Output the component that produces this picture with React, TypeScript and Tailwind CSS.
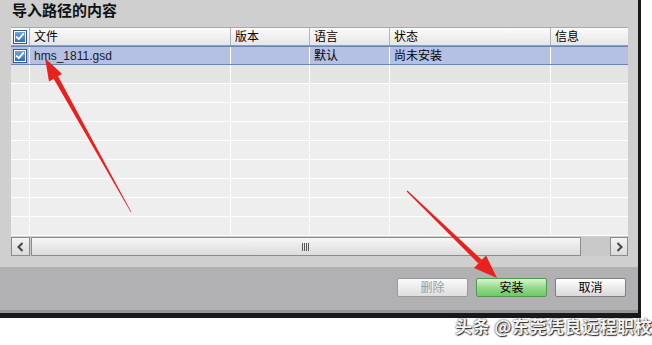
import React from 'react'

const cols = [19, 201, 79, 80, 161, 77]
const font = '"Liberation Sans", "Noto Sans CJK SC", sans-serif'

function Check() {
  return (
    <span className="flex h-[14px] w-[14px] items-center justify-center border border-[#39598a] bg-white p-[1px]">
      <span className="flex h-full w-full items-center justify-center bg-gradient-to-b from-[#6fa6e0] to-[#2e6cc0]">
        <svg width="10" height="9" viewBox="0 0 10 9">
          <path d="M1.2 4.6 L3.8 7.2 L8.8 1.4" fill="none" stroke="#fff" strokeWidth="1.8" />
        </svg>
      </span>
    </span>
  )
}

function Row({ cells, className }: { cells: React.ReactNode[]; className: string }) {
  return (
    <div className={`flex h-[19px] ${className}`}>
      {cols.map((w, i) => (
        <div
          key={i}
          style={{ width: w }}
          className="flex shrink-0 items-center overflow-hidden border-r border-white pl-[4px] text-[12px] leading-none text-black last:border-r-0"
        >
          {cells[i]}
        </div>
      ))}
    </div>
  )
}

function Btn({ label, kind }: { label: string; kind: 'off' | 'go' | 'norm' }) {
  const cls =
    kind === 'go'
      ? 'border-[#4f9a4c] bg-gradient-to-b from-[#d9f3d2] via-[#94da8c] to-[#72c66c] text-black'
      : kind === 'off'
        ? 'border-[#9a9a9a] bg-gradient-to-b from-[#fafafa] to-[#dedede] text-[#9c9c9c]'
        : 'border-[#7f7f7f] bg-gradient-to-b from-[#ffffff] to-[#d9d9d9] text-black'
  return (
    <div className={`flex h-[19px] w-[71px] items-center justify-center rounded-[2px] border text-[12px] leading-none ${cls}`}>
      {label}
    </div>
  )
}

export default function App() {
  return (
    <div className="relative h-[345px] w-[652px] overflow-hidden bg-white" style={{ fontFamily: font }}>
      <div className="flex h-[318px] w-[641px] flex-col border-r-[3px] border-b-[5px] border-[#19191b]">
        <div className="flex h-[267px] flex-col bg-[#cfcfcf] pl-[11px] pr-[10px]">
          <div className="h-[27px] pl-[1px] pt-[2px] text-[15px] font-bold leading-[18px] text-[#111]">导入路径的内容</div>
          <div className="flex flex-col">
            <div className="flex h-[19px] border-t border-[#a9a9a9] border-b border-b-[#9d9d9d] bg-gradient-to-b from-[#fbfbfb] to-[#e6e6e6]">
              {cols.map((w, i) => (
                <div
                  key={i}
                  style={{ width: w }}
                  className="flex shrink-0 items-center border-r border-[#b4b4b4] pl-[4px] text-[12px] leading-none text-black last:border-r-0"
                >
                  {i === 0 ? <span className="-ml-[2px]"><Check /></span> : ['', '文件', '版本', '语言', '状态', '信息'][i]}
                </div>
              ))}
            </div>
            <Row
              className="border-y border-[#6a84b4] bg-[#b4c1e4]"
              cells={[
                <span className="-ml-[2px]"><Check /></span>,
                <span className="text-[#1a1a2a]">hms_1811.gsd</span>,
                '',
                '默认',
                '尚未安装',
                '',
              ]}
            />
            {Array.from({ length: 9 }).map((_, r) => (
              <Row
                key={r}
                className={`border-b border-white ${r === 0 ? 'bg-[#e4e4e4]' : 'bg-[#eeeeee]'}`}
                cells={[]}
              />
            ))}
          </div>
          <div className="mt-[1px] flex h-[19px] items-stretch bg-[#c9c9c9]">
            <div className="flex w-[19px] items-center justify-center border border-[#8c8c8c] bg-gradient-to-b from-[#f4f4f4] to-[#dadada]">
              <svg width="7" height="10" viewBox="0 0 7 10"><path d="M5.5 1 L1.5 5 L5.5 9" fill="none" stroke="#444" strokeWidth="2" /></svg>
            </div>
            <div className="ml-[1px] flex w-[550px] items-center justify-center border border-[#8c8c8c] bg-gradient-to-b from-[#f6f6f6] to-[#dcdcdc]">
              <svg width="8" height="8" viewBox="0 0 8 8">
                <path d="M0.5 0 V8 M2.5 0 V8 M4.5 0 V8 M6.5 0 V8" stroke="#555" strokeWidth="1" />
              </svg>
            </div>
            <div className="flex-1" />
            <div className="flex w-[18px] items-center justify-center border border-[#8c8c8c] bg-gradient-to-b from-[#f4f4f4] to-[#dadada]">
              <svg width="7" height="10" viewBox="0 0 7 10"><path d="M1.5 1 L5.5 5 L1.5 9" fill="none" stroke="#444" strokeWidth="2" /></svg>
            </div>
          </div>
        </div>
        <div className="flex flex-1 items-start justify-end gap-[8px] border-b-[3px] border-[#979797] bg-[#b1b0b3] pr-[12px] pt-[11px]">
          <Btn label="删除" kind="off" />
          <Btn label="安装" kind="go" />
          <Btn label="取消" kind="norm" />
        </div>
      </div>

      <svg className="pointer-events-none absolute left-0 top-0" width="652" height="345" viewBox="0 0 652 345">
        <polygon points="131.5,212.3 130.5,211.7 53.5,78.5 57.9,76.1" fill="#e8211c" />
        <polygon points="45,58 62,74 49,81.5" fill="#e8211c" />
        <polygon points="406.6,191.4 407.4,190.6 482,260 478.4,263.5" fill="#e8211c" />
        <polygon points="497,278 474,268 486,255.5" fill="#e8211c" />
      </svg>

      <div
        className="absolute left-[455px] top-[316px] text-[17px] font-bold leading-[20px] tracking-[0.5px] text-[#f4f4f4] [text-shadow:0_0_2px_#222,1px_1px_1px_#333]"
        style={{ fontFamily: '"Noto Sans CJK SC", sans-serif' }}
      >
        头条 @东莞凭良远程职校
      </div>
    </div>
  )
}
